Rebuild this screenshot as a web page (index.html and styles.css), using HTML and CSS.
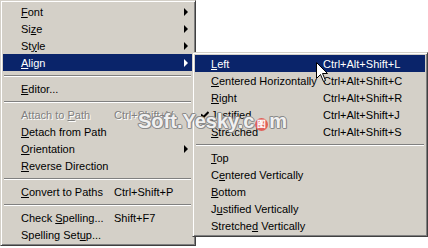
FILE: index.html
```html
<!DOCTYPE html>
<html lang="en">

<head>
  <meta charset="UTF-8" />
  <title>Text Align Menu</title>
  <link rel="stylesheet" href="styles.css">
</head>

<body>
  <div class="screen">
    <!-- main context menu -->
    <div class="menu main-menu">
      <div class="item"><span class="label"><u>F</u>ont</span><span class="key"></span><span class="arrow"></span></div>
      <div class="item"><span class="label">Si<u>z</u>e</span><span class="key"></span><span class="arrow"></span></div>
      <div class="item"><span class="label">St<u>y</u>le</span><span class="key"></span><span class="arrow"></span></div>
      <div class="item active"><span class="label"><u>A</u>lign</span><span class="key"></span><span class="arrow"></span></div>
      <div class="sep"></div>
      <div class="item"><span class="label"><u>E</u>ditor...</span><span class="key"></span><span></span></div>
      <div class="sep"></div>
      <div class="item disabled"><span class="label">Attach to <u>P</u>ath</span><span class="key">Ctrl+Shift+V</span><span></span></div>
      <div class="item"><span class="label"><u>D</u>etach from Path</span><span class="key"></span><span></span></div>
      <div class="item"><span class="label"><u>O</u>rientation</span><span class="key"></span><span class="arrow"></span></div>
      <div class="item"><span class="label"><u>R</u>everse Direction</span><span class="key"></span><span></span></div>
      <div class="sep"></div>
      <div class="item"><span class="label"><u>C</u>onvert to Paths</span><span class="key">Ctrl+Shift+P</span><span></span></div>
      <div class="sep"></div>
      <div class="item"><span class="label">Check <u>S</u>pelling...</span><span class="key">Shift+F7</span><span></span></div>
      <div class="item"><span class="label">Spelling Set<u>u</u>p...</span><span class="key"></span><span></span></div>
    </div>

    <!-- Align submenu -->
    <div class="menu sub-menu">
      <div class="item active"><span class="check"></span><span class="label"><u>L</u>eft</span><span class="key">Ctrl+Alt+Shift+L</span></div>
      <div class="item"><span class="check"></span><span class="label"><u>C</u>entered Horizontally</span><span class="key">Ctrl+Alt+Shift+C</span></div>
      <div class="item"><span class="check"></span><span class="label"><u>R</u>ight</span><span class="key">Ctrl+Alt+Shift+R</span></div>
      <div class="item"><span class="check"><svg width="8" height="8" viewBox="0 0 8 8"><path d="M0 3.5 L2.5 6 L7.5 1" fill="none" stroke="#000" stroke-width="2"/></svg></span><span class="label"><u>J</u>ustified</span><span class="key">Ctrl+Alt+Shift+J</span></div>
      <div class="item"><span class="check"></span><span class="label"><u>S</u>tretched</span><span class="key">Ctrl+Alt+Shift+S</span></div>
      <div class="sep"></div>
      <div class="item"><span class="check"></span><span class="label"><u>T</u>op</span><span class="key"></span></div>
      <div class="item"><span class="check"></span><span class="label">C<u>e</u>ntered Vertically</span><span class="key"></span></div>
      <div class="item"><span class="check"></span><span class="label"><u>B</u>ottom</span><span class="key"></span></div>
      <div class="item"><span class="check"></span><span class="label">J<u>u</u>stified Vertically</span><span class="key"></span></div>
      <div class="item"><span class="check"></span><span class="label">Stretche<u>d</u> Vertically</span><span class="key"></span></div>
    </div>

    <!-- watermark over the menus -->
    <div class="watermark">Soft.Yesky.c<span class="wm-dot">图</span>m</div>

    <!-- mouse pointer -->
    <svg class="cursor" width="13" height="21" viewBox="0 0 13 21">
      <path d="M0.5 0.5 L0.5 16.5 L4.5 12.5 L7.5 19.5 L9.5 18.5 L6.5 11.5 L11.5 11.5 Z" fill="#fff" stroke="#000" stroke-width="1"/>
    </svg>
  </div>
</body>

</html>
```

FILE: styles.css
```css
/* whole picture */
body {
  margin: 0;
  background: #fff;
}

.screen {
  position: relative;
  width: 428px;
  height: 248px;
  overflow: hidden;
  display: flex;
  align-items: flex-start;
  font-family: "Liberation Sans", Arial, sans-serif;
  font-size: 11px;
  color: #000;
}

/* classic 3D menu box */
.menu {
  background: #d4d0c8;
  border-top: 1px solid #d4d0c8;
  border-left: 1px solid #d4d0c8;
  border-right: 1px solid #404040;
  border-bottom: 1px solid #404040;
  box-shadow: inset 1px 1px 0 #fff, inset -1px -1px 0 #808080;
  padding: 2px 3px 2px 2px;
}

.main-menu {
  width: 189px;
  flex: none;
}

.sub-menu {
  width: 230px;
  flex: none;
  margin-top: 52px;
  margin-left: -4px;
  padding-right: 2px;
}

/* menu rows */
.item {
  height: 17px;
  display: grid;
  align-items: center;
  white-space: nowrap;
}

.main-menu .item {
  grid-template-columns: 111px 1fr 9px;
}

.main-menu .label {
  padding-left: 18px;
}

.sub-menu .item {
  grid-template-columns: 16px 112px 1fr;
}

.item u {
  text-decoration: underline;
  text-underline-offset: 1px;
}

.item.active {
  background: #0a246a;
  color: #fff;
}

.item.disabled {
  color: #808080;
  text-shadow: 1px 1px 0 #fff;
}

.check {
  display: flex;
  justify-content: center;
  padding-left: 4px;
}

/* little submenu triangle */
.arrow {
  width: 0;
  height: 0;
  border-top: 4px solid transparent;
  border-bottom: 4px solid transparent;
  border-left: 4px solid #000;
  margin-left: 1px;
}

.item.active .arrow {
  border-left-color: #fff;
}

/* etched separator */
.sep {
  height: 9px;
  display: flex;
  align-items: center;
}

.sep::before {
  content: "";
  flex: 1;
  height: 0;
  border-top: 1px solid #808080;
  border-bottom: 1px solid #fff;
  margin: 0 1px;
}

/* Soft.Yesky.com watermark */
.watermark {
  position: absolute;
  left: 138px;
  top: 110px;
  font-family: "Liberation Sans", Arial, sans-serif;
  font-weight: bold;
  font-size: 20px;
  color: rgba(255, 255, 255, 0.9);
  text-shadow: 1px 0 0 #8a8a8a, -1px 0 0 #8a8a8a, 0 1px 0 #8a8a8a, 0 -1px 0 #8a8a8a,
    1px 1px 0 #9a9a9a, -1px -1px 0 #9a9a9a;
}

.wm-dot {
  display: inline-block;
  width: 13px;
  height: 13px;
  border-radius: 50%;
  background: #e0605a;
  color: #fff;
  font-size: 9px;
  line-height: 13px;
  text-align: center;
  text-shadow: none;
  vertical-align: 1px;
  margin: 0 1px;
}

/* mouse pointer */
.cursor {
  position: absolute;
  left: 316px;
  top: 62px;
}
```
